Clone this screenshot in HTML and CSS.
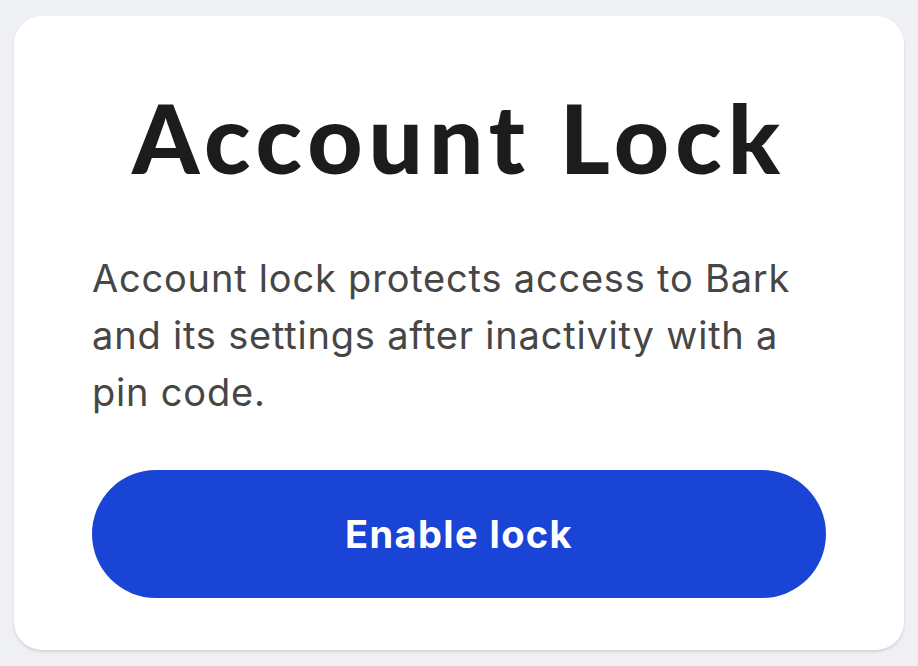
FILE: index.html
```html
<!DOCTYPE html>
<html lang="en">
<head>
<meta charset="utf-8">
<link rel="stylesheet" href="styles.css">
</head>
<body>
<main class="card">
  <h1 class="title">Account Lock</h1>
  <p class="desc">Account lock protects access to Bark and its settings after inactivity with a pin code.</p>
  <button class="btn" type="button">Enable lock</button>
</main>
</body>
</html>
```

FILE: styles.css
```css
html, body {
  margin: 0;
  padding: 0;
}
body {
  background: #eff0f4;
  width: 918px;
  height: 666px;
  overflow: hidden;
  padding: 16px 14px 0 14px;
  box-sizing: border-box;
}
.card {
  background: #ffffff;
  border-radius: 28px;
  height: 634px;
  box-sizing: border-box;
  padding: 0 78px;
  box-shadow: 0 2px 3px rgba(0, 0, 0, 0.12);
  display: flex;
  flex-direction: column;
}
.title {
  margin: 66px 0 0 0;
  font-family: "Lato", "Inter", sans-serif;
  font-weight: 900;
  font-size: 96px;
  line-height: 110px;
  text-align: center;
  color: #1c1c1c;
  letter-spacing: 6px;
  white-space: nowrap;
}
.desc {
  margin: 58px 0 0 0;
  font-family: "Inter", "Roboto", sans-serif;
  font-weight: 400;
  font-size: 38px;
  line-height: 57px;
  letter-spacing: 0.8px;
  color: #464646;
}
.btn {
  margin-top: 49px;
  height: 128px;
  flex: none;
  border: none;
  border-radius: 64px;
  background: #1a44d6;
  color: #ffffff;
  font-family: "Inter", "Roboto", sans-serif;
  font-weight: 700;
  font-size: 38px;
  letter-spacing: 1.4px;
  width: 100%;
}
```
